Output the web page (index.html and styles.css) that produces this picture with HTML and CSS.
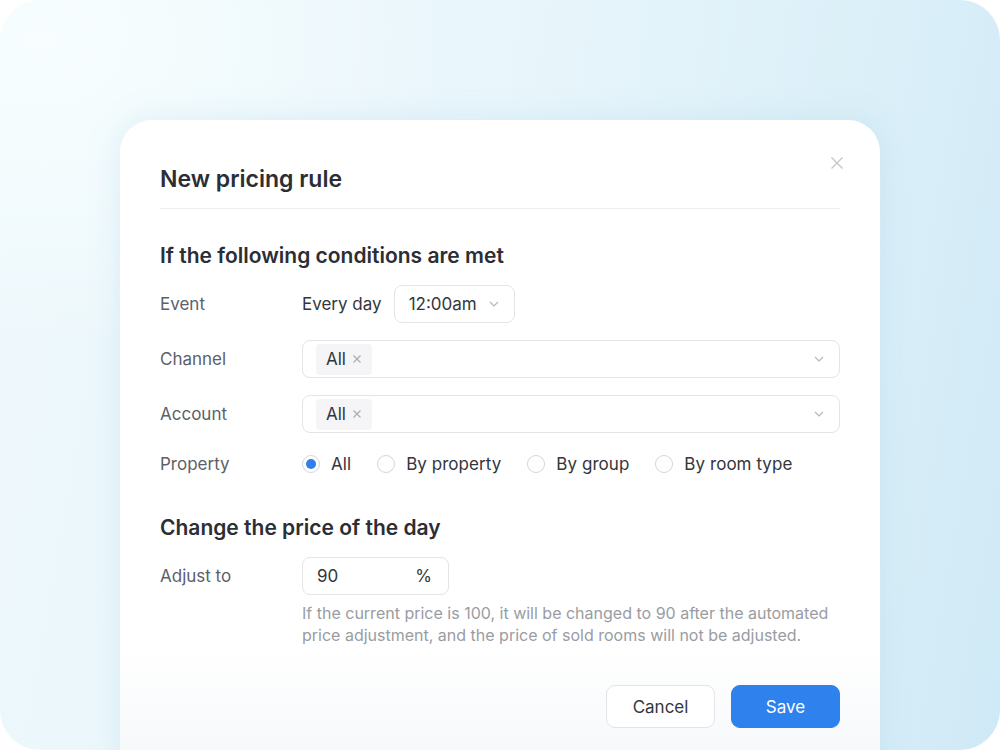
FILE: index.html
```html
<!DOCTYPE html>
<html>
<head>
<meta charset="utf-8">
<link rel="stylesheet" href="styles.css">
</head>
<body>
<div class="frame">
  <div class="modal">
    <div class="modal-header">
      <h1 class="title">New pricing rule</h1>
      <svg class="close" width="14" height="14" viewBox="0 0 14 14"><path d="M1.5 1.5 L12.5 12.5 M12.5 1.5 L1.5 12.5" stroke="#c4c6ca" stroke-width="1.4" fill="none"/></svg>
    </div>

    <h2 class="section first">If the following conditions are met</h2>

    <div class="row">
      <div class="label">Event</div>
      <div class="field inline">
        <span class="text">Every day</span>
        <div class="select small">
          <span>12:00am</span>
          <svg class="chev" width="12" height="8" viewBox="0 0 12 8"><path d="M2 2 L6 6 L10 2" stroke="#b4b7bc" stroke-width="1.2" fill="none"/></svg>
        </div>
      </div>
    </div>

    <div class="row">
      <div class="label">Channel</div>
      <div class="field">
        <div class="select wide">
          <span class="tag">All <svg width="10" height="10" viewBox="0 0 10 10"><path d="M1.5 1.5 L8.5 8.5 M8.5 1.5 L1.5 8.5" stroke="#a9acb1" stroke-width="1.2" fill="none"/></svg></span>
          <svg class="chev" width="12" height="8" viewBox="0 0 12 8"><path d="M2 2 L6 6 L10 2" stroke="#b4b7bc" stroke-width="1.2" fill="none"/></svg>
        </div>
      </div>
    </div>

    <div class="row">
      <div class="label">Account</div>
      <div class="field">
        <div class="select wide">
          <span class="tag">All <svg width="10" height="10" viewBox="0 0 10 10"><path d="M1.5 1.5 L8.5 8.5 M8.5 1.5 L1.5 8.5" stroke="#a9acb1" stroke-width="1.2" fill="none"/></svg></span>
          <svg class="chev" width="12" height="8" viewBox="0 0 12 8"><path d="M2 2 L6 6 L10 2" stroke="#b4b7bc" stroke-width="1.2" fill="none"/></svg>
        </div>
      </div>
    </div>

    <div class="row short">
      <div class="label">Property</div>
      <div class="field radios">
        <label class="radio"><span class="dot checked"></span>All</label>
        <label class="radio"><span class="dot"></span>By property</label>
        <label class="radio"><span class="dot"></span>By group</label>
        <label class="radio"><span class="dot"></span>By room type</label>
      </div>
    </div>

    <h2 class="section second">Change the price of the day</h2>

    <div class="row">
      <div class="label">Adjust to</div>
      <div class="field">
        <div class="input-num"><span>90</span><span>%</span></div>
      </div>
    </div>
    <p class="help">If the current price is 100, it will be changed to 90 after the automated<br>price adjustment, and the price of sold rooms will not be adjusted.</p>

    <div class="actions">
      <button class="btn">Cancel</button>
      <button class="btn primary">Save</button>
    </div>
  </div>
</div>
</body>
</html>
```
FILE: styles.css
```css
* { box-sizing: border-box; }
html, body { margin: 0; padding: 0; background: #ffffff; }
body { font-family: Inter, "Noto Sans", sans-serif; }

.frame {
  width: 1000px;
  height: 750px;
  border-radius: 40px;
  overflow: hidden;
  padding: 120px 120px 0;
  background:
    radial-gradient(ellipse 420px 320px at 40px 40px, rgba(248,254,255,0.95), rgba(248,254,255,0) 100%),
    linear-gradient(100deg, #eef8fc 0%, #e9f6fb 45%, #d8eef8 85%, #cfe9f6 100%);
}

.modal {
  width: 760px;
  height: 660px;
  background: linear-gradient(180deg, #ffffff 0%, #ffffff 80%, #f4f7f9 100%);
  border-radius: 32px;
  padding: 37px 40px 0;
  box-shadow: 0 0 30px rgba(150, 200, 225, 0.25);
}

.modal-header {
  display: flex;
  justify-content: space-between;
  align-items: flex-start;
  border-bottom: 1px solid #eeeff1;
  padding-bottom: 7px;
}
.title {
  margin: 0;
  font-size: 23px;
  line-height: 44px;
  font-weight: 600;
  color: #2b2e34;
}
.close { margin-top: -1px; margin-right: -4px; }

.section {
  margin: 0;
  font-size: 21px;
  line-height: 28px;
  font-weight: 600;
  color: #2b2e34;
}
.section.first { margin-top: 33px; margin-bottom: 15px; }
.section.second { margin-top: 36px; margin-bottom: 15px; }

.row {
  display: flex;
  align-items: center;
  height: 38px;
  margin-bottom: 17px;
  font-size: 17px;
}
.row.short { height: 28px; margin-bottom: 0; }
.label {
  width: 142px;
  flex: none;
  color: #5c6069;
}
.field { flex: 1; display: flex; align-items: center; color: #33363c; }
.field.inline { gap: 12px; }

.select {
  height: 38px;
  border: 1px solid #e3e4e8;
  border-radius: 8px;
  display: flex;
  align-items: center;
  justify-content: space-between;
  background: #fff;
}
.select.small { width: 121px; padding: 0 14px 0 14px; }
.select.wide { flex: 1; padding: 0 14px 0 13px; }
.tag {
  display: inline-flex;
  align-items: center;
  gap: 6px;
  height: 31px;
  padding: 0 10px;
  background: #f5f5f7;
  border-radius: 4px;
  color: #33363c;
}

.radios { gap: 0; }
.radio {
  display: inline-flex;
  align-items: center;
  gap: 11px;
  margin-right: 26px;
  letter-spacing: 0.05px;
  color: #33363c;
}
.dot {
  width: 18px;
  height: 18px;
  border-radius: 50%;
  border: 1px solid #d4d6da;
  background: #fff;
  position: relative;
}
.dot.checked::after {
  content: "";
  position: absolute;
  left: 3px;
  top: 3px;
  width: 10px;
  height: 10px;
  border-radius: 50%;
  background: #2f80ed;
}

.input-num {
  width: 147px;
  height: 38px;
  border: 1px solid #e3e4e8;
  border-radius: 8px;
  display: flex;
  align-items: center;
  justify-content: space-between;
  padding: 0 16px 0 14px;
}

.help {
  margin: -10px 0 0 142px;
  font-size: 16px;
  line-height: 22px;
  color: #999ca3;
}

.actions {
  display: flex;
  justify-content: flex-end;
  gap: 16px;
  margin-top: 39px;
}
.btn {
  width: 109px;
  height: 43px;
  border-radius: 9px;
  border: 1px solid #e3e4e8;
  background: #fff;
  font-family: Inter, "Noto Sans", sans-serif;
  font-size: 17px;
  color: #33363c;
}
.btn.primary {
  background: #2f81ed;
  border-color: #2f81ed;
  color: #fff;
}
```
